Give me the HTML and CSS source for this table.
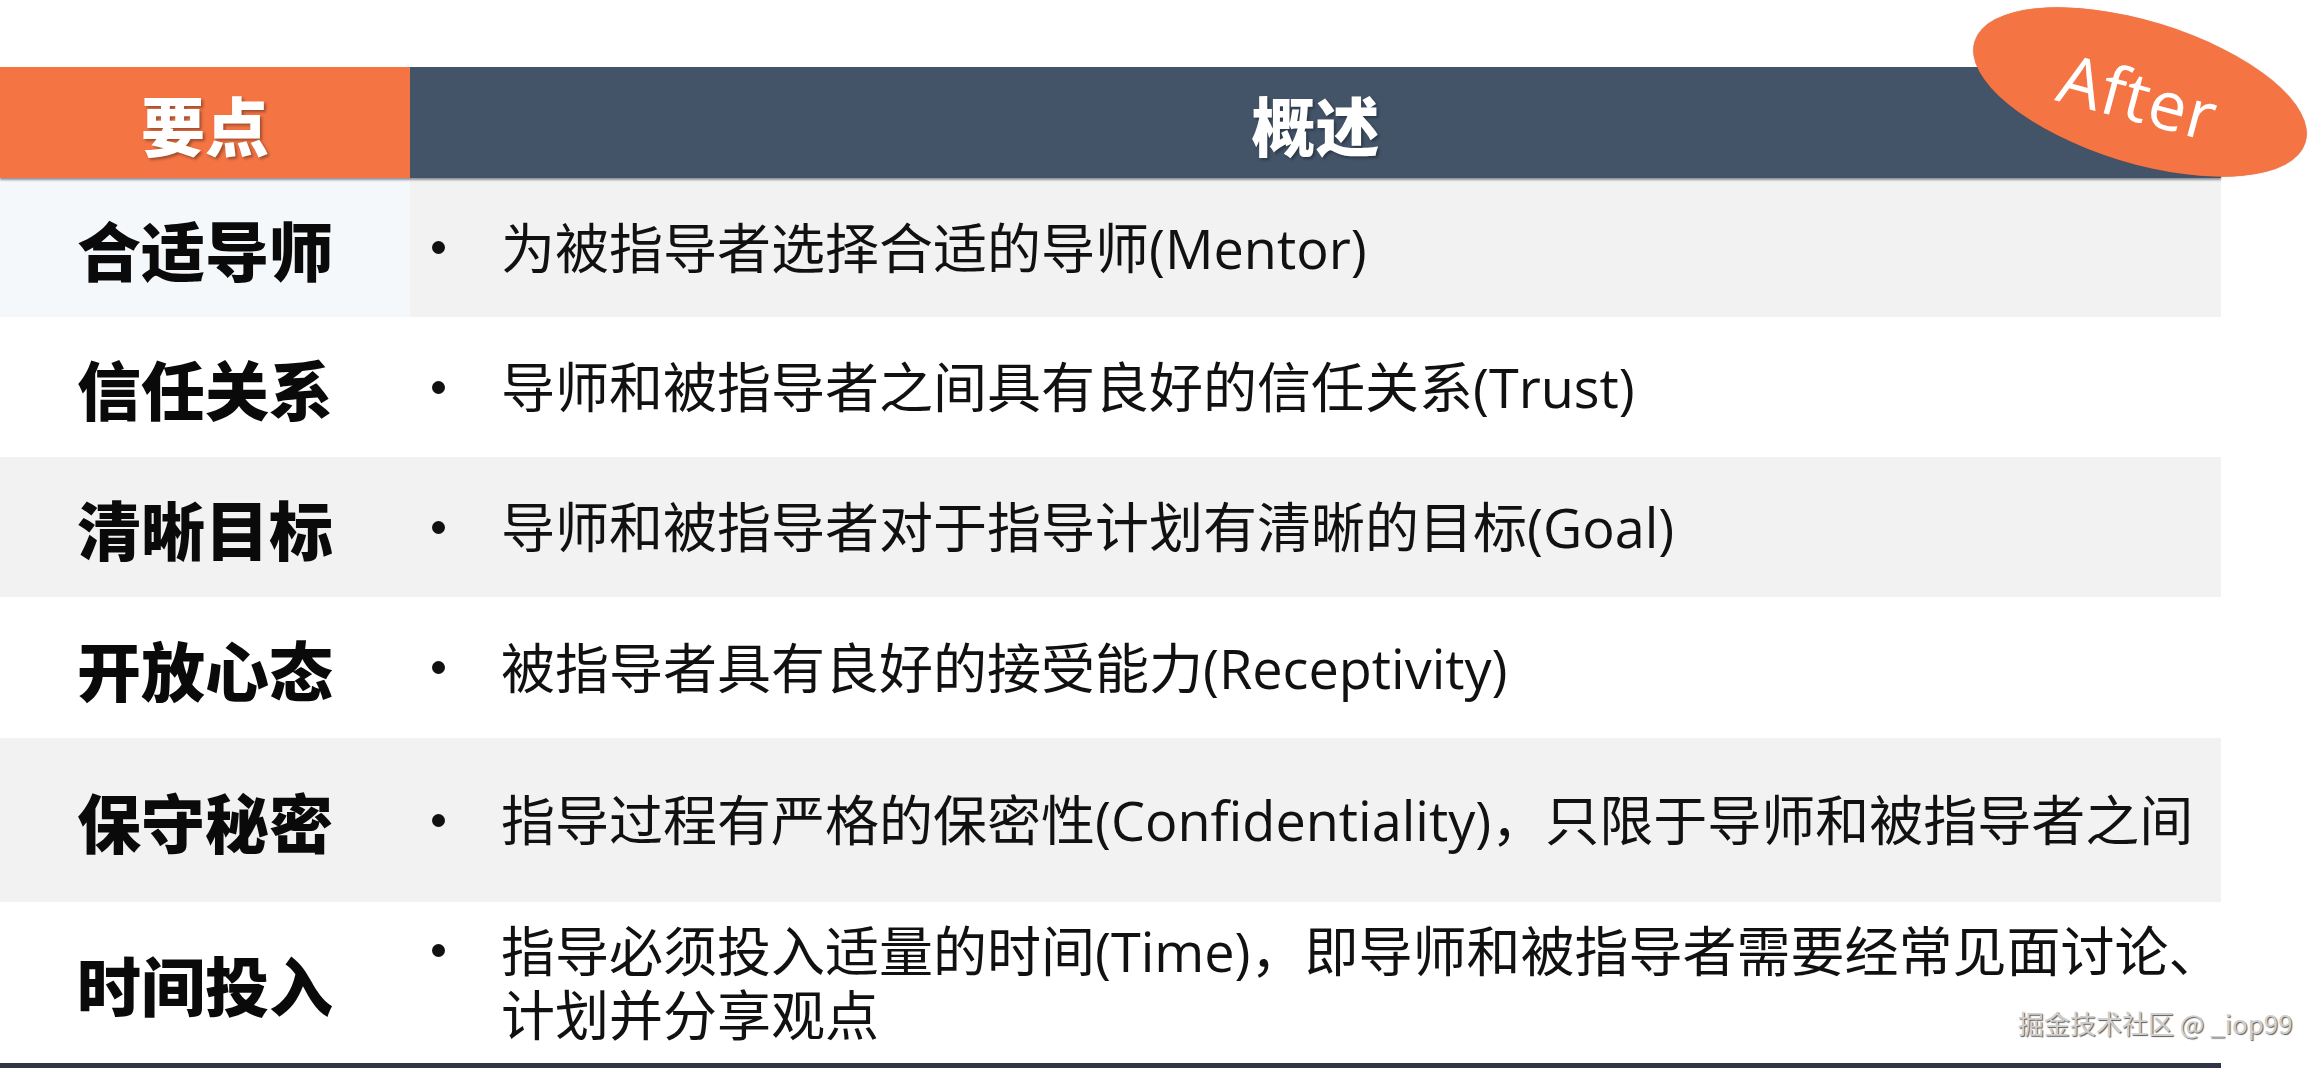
FILE: index.html
```html
<!DOCTYPE html>
<html lang="zh-CN">
<head>
<meta charset="utf-8">
<title>Mentor 要点</title>
<link rel="stylesheet" href="styles.css">
</head>
<body>
<div class="slide">
  <div class="table">
    <div class="head">
      <div class="th th-key">要点</div>
      <div class="th th-desc">概述</div>
    </div>
    <div class="row shaded r1">
      <div class="key key-light">合适导师</div>
      <div class="desc"><div class="item"><span class="bullet"></span><span class="text">为被指导者选择合适的导师(Mentor)</span></div></div>
    </div>
    <div class="row r2">
      <div class="key">信任关系</div>
      <div class="desc"><div class="item"><span class="bullet"></span><span class="text">导师和被指导者之间具有良好的信任关系(Trust)</span></div></div>
    </div>
    <div class="row shaded r3">
      <div class="key">清晰目标</div>
      <div class="desc"><div class="item"><span class="bullet"></span><span class="text">导师和被指导者对于指导计划有清晰的目标(Goal)</span></div></div>
    </div>
    <div class="row r4">
      <div class="key">开放心态</div>
      <div class="desc"><div class="item"><span class="bullet"></span><span class="text">被指导者具有良好的接受能力(Receptivity)</span></div></div>
    </div>
    <div class="row shaded r5">
      <div class="key">保守秘密</div>
      <div class="desc"><div class="item"><span class="bullet"></span><span class="text">指导过程有严格的保密性(Confidentiality)，只限于导师和被指导者之间</span></div></div>
    </div>
    <div class="row r6">
      <div class="key">时间投入</div>
      <div class="desc"><div class="item"><span class="bullet"></span><span class="text"><span class="line">指导必须投入适量的时间(Time)，即导师和被指导者需要经常见面讨论、</span><span class="line">计划并分享观点</span></span></div></div>
    </div>
  </div>
  <div class="bottom-bar"></div>
  <div class="badge"><span class="badge-text">After</span></div>
  <div class="watermark">掘金技术社区 @ _iop99</div>
</div>
</body>
</html>
```

FILE: styles.css
```css
html, body {
  margin: 0;
  padding: 0;
  background: #ffffff;
}

body {
  width: 2311px;
  height: 1068px;
  overflow: hidden;
  font-family: "Noto Sans CJK SC", "Noto Sans", sans-serif;
  color: #111111;
}

.slide {
  position: relative;
  width: 2311px;
  height: 1068px;
  padding-top: 67px;
  box-sizing: border-box;
}

.table {
  width: 2221px;
  display: flex;
  flex-direction: column;
}

.head {
  display: grid;
  grid-template-columns: 410px 1fr;
  height: 111px;
  box-shadow: 0 2px 2px rgba(20, 28, 40, 0.45);
  position: relative;
  z-index: 1;
}

.th {
  display: flex;
  align-items: center;
  justify-content: center;
  color: #ffffff;
  font-size: 64px;
  font-weight: 900;
  line-height: 1;
  text-shadow: 2px 2px 3px rgba(0, 0, 0, 0.35);
}

.th-key {
  background: #f47444;
}

.th-desc {
  background: #435469;
}

.row {
  display: grid;
  grid-template-columns: 410px 1fr;
}

.r1 { height: 139px; }
.r2 { height: 140px; }
.r3 { height: 140px; }
.r4 { height: 141px; }
.r5 { height: 164px; }
.r6 { height: 161px; }

.shaded {
  background: #f2f2f2;
}

.key {
  display: flex;
  align-items: center;
  justify-content: center;
  font-size: 64px;
  font-weight: 900;
  line-height: 1;
  color: #0a0a0a;
}

.key-light {
  background: #f5f8fa;
}

.desc {
  display: flex;
  align-items: center;
  padding-left: 22px;
}

.item {
  display: flex;
  align-items: flex-start;
}

.bullet {
  flex: none;
  width: 13px;
  height: 64px;
  margin-right: 56px;
  display: flex;
  align-items: center;
  justify-content: center;
}

.bullet::before {
  content: "";
  width: 13px;
  height: 13px;
  border-radius: 50%;
  background: #111111;
}

.text {
  font-family: "Open Sans", "Noto Sans CJK SC", sans-serif;
  font-size: 54px;
  line-height: 64px;
  white-space: nowrap;
  color: #111111;
}

.line {
  display: block;
}

.bottom-bar {
  width: 2221px;
  height: 5px;
  background: #2e3646;
}

.badge {
  position: absolute;
  left: 1967px;
  top: 21px;
  width: 346px;
  height: 142px;
  border-radius: 50%;
  background: #f47444;
  transform: rotate(17deg);
  display: flex;
  align-items: center;
  justify-content: center;
  z-index: 2;
  box-shadow: 0 0 1px rgba(150, 60, 20, 0.6);
}

.badge-text {
  font-family: "Open Sans", "Liberation Sans", sans-serif;
  font-size: 68px;
  font-weight: 400;
  color: #ffffff;
  letter-spacing: 1px;
  transform: rotate(-2deg);
  margin-top: 6px;
}

.watermark {
  position: absolute;
  left: 2018px;
  top: 1006px;
  font-size: 26px;
  line-height: 34px;
  color: #cfcfcf;
  text-shadow: 1px 1px 1px #5a5a5a;
  white-space: nowrap;
  z-index: 3;
}
```
